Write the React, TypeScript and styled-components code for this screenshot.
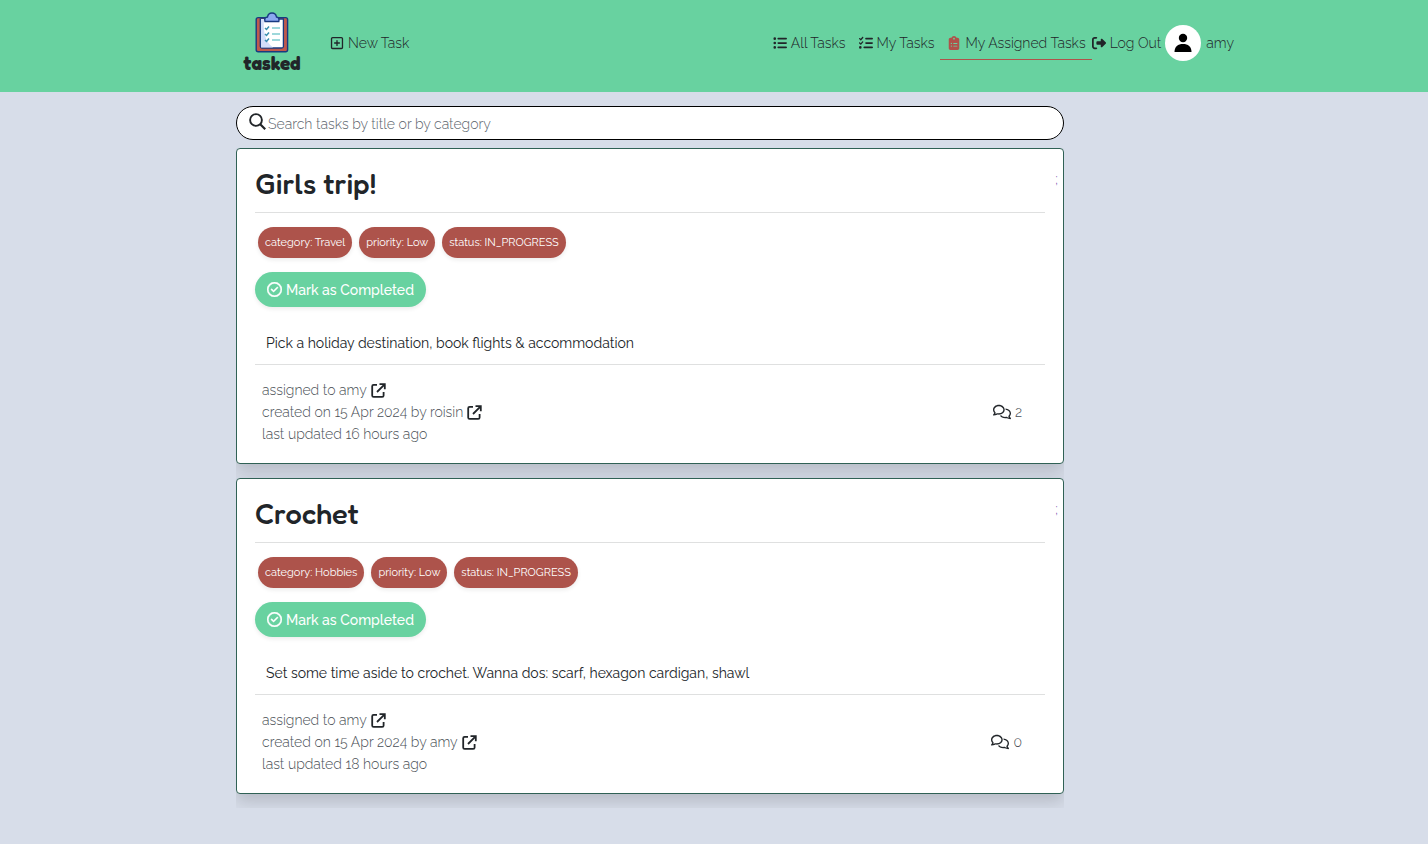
import React from "react";
import styled, { createGlobalStyle } from "styled-components";
import {
  FaRegSquarePlus,
  FaListUl,
  FaListCheck,
  FaClipboardList,
  FaRightFromBracket,
  FaRegCircleCheck,
  FaRegComments,
} from "react-icons/fa6";

const GlobalStyle = createGlobalStyle`
  *, *::before, *::after { box-sizing: border-box; }
  body {
    margin: 0;
    min-height: 100vh;
    background: #d7dde9;
    color: #212529;
    font-family: Raleway, Lato, sans-serif;
    font-size: 14px;
    font-weight: 300;
    line-height: 22px;
  }
`;

const Header = styled.header`
  background: #68d2a0;
  padding: 11px max(16px, calc(50% - 520px)) 11px max(16px, calc(50% - 478px));
  display: flex;
  align-items: center;
  height: 92px;
`;

const Brand = styled.a`
  display: block;
  margin: 0 0 8px 7px;
  svg { display: block; }
`;

const Nav = styled.nav`
  display: flex;
  flex: 1;
  align-items: center;
  margin: 0 0 6px 22px;
  white-space: nowrap;
`;

const NavLink = styled.a<{ $active?: boolean }>`
  display: flex;
  align-items: center;
  gap: 4px;
  height: 34px;
  padding: 1px 6px 0 7px;
  color: #212529;
  text-decoration: none;
  border-bottom: 1px solid ${(p) => (p.$active ? "#b0524a" : "transparent")};
  svg { font-size: 14px; flex: none; color: ${(p) => (p.$active ? "#b0524a" : "#212529")}; }
`;

const NavEnd = styled.div`
  display: flex;
  align-items: center;
  margin-left: auto;
`;

const LogOut = styled(NavLink)`
  padding: 1px 4px 0 0;
`;

const Profile = styled.a`
  display: flex;
  align-items: center;
  gap: 5px;
  color: #212529;
  text-decoration: none;
`;

const Avatar = styled.span`
  display: block;
  width: 36px;
  height: 36px;
  border-radius: 50%;
  background: #fff;
  svg { display: block; }
`;

const Main = styled.main`
  max-width: 956px;
  margin: 0 auto;
  padding-top: 14px;
`;

const Column = styled.div`
  width: 828px;
  max-width: 100%;
`;

const SearchForm = styled.form`
  display: flex;
  align-items: center;
  height: 34px;
  padding: 0 12px;
  border: 1px solid #000;
  border-radius: 17px;
  background: #fff;
  svg { flex: none; margin-bottom: 3px; }
`;

const SearchInput = styled.input`
  flex: 1;
  min-width: 0;
  border: 0;
  outline: 0;
  padding: 2px 2px 0;
  background: transparent;
  font: inherit;
  color: #212529;
  &::placeholder { color: #5c656d; opacity: 1; }
`;

const TaskList = styled.section`
  display: flex;
  flex-direction: column;
  gap: 14px;
  margin-top: 8px;
  padding-bottom: 14px;
  overflow: hidden;
`;

const Card = styled.article`
  display: flex;
  flex-direction: column;
  position: relative;
  padding: 18px;
  border: 1px solid #306155;
  border-radius: 4px;
  background: #fff;
  box-shadow: 0 8px 16px rgba(0, 0, 0, 0.15);
`;

const Stray = styled.span`
  position: absolute;
  top: 19px;
  right: 5px;
  color: #6a3fa8;
`;

const Title = styled.h2`
  margin: 0;
  padding-bottom: 12px;
  border-bottom: 1px solid #dfe0e0;
  font-family: Fredoka, Lato, sans-serif;
  font-size: 29px;
  font-weight: 500;
  line-height: 33px;
`;

const Badges = styled.div`
  display: flex;
  gap: 7px;
  margin: 14px 3px;
`;

const Badge = styled.span`
  padding: 0 7px;
  border-radius: 16px;
  background: #ad534b;
  color: #fff;
  font-size: 11px;
  font-weight: 400;
  line-height: 31px;
  box-shadow: 0 2px 4px rgba(0, 0, 0, 0.08);
`;

const CompleteButton = styled.button`
  display: flex;
  align-items: center;
  align-self: flex-start;
  gap: 4px;
  height: 35px;
  padding: 0 12px;
  border: 0;
  border-radius: 18px;
  background: #68d2a0;
  color: #fff;
  font: inherit;
  font-weight: 500;
  box-shadow: 0 2px 4px rgba(0, 0, 0, 0.08);
  svg { font-size: 15px; stroke-width: 14px; }
`;

const Description = styled.p`
  margin: 25px 0 0;
  padding: 0 11px 10px;
  border-bottom: 1px solid #dfe0e0;
  font-weight: 400;
`;

const Footer = styled.footer`
  display: flex;
  align-items: center;
  justify-content: space-between;
  padding: 14px 23px 0 7px;
  color: #4a5056;
`;

const MetaLine = styled.div`
  display: flex;
  align-items: center;
  gap: 4px;
  a { display: block; color: #212529; }
  svg { display: block; }
`;

const Comments = styled.a`
  display: flex;
  align-items: center;
  gap: 4px;
  color: #4a5056;
  text-decoration: none;
  svg { font-size: 18px; color: #212529; }
`;

function Logo() {
  return (
    <svg width="58" height="62" viewBox="0 0 58 62" role="img" aria-label="tasked">
      <rect x="13.2" y="6.6" width="31.400" height="34.200" rx="2" fill="#c0594c" stroke="#183a80" strokeWidth="1.4" />
      <path d="M17.300 8V35.500Q17.300 37 19 37H38.700Q40.400 37 40.400 35.500V8Z" fill="#fff" stroke="#183a80" strokeWidth="1.300" />
      <path d="M18 8H21C20 20 22 31 30 36.400H18Z" fill="#d3defa" />
      <path d="M22 10.500H35.800C36.500 8 35.500 6 33.500 6C33 3 31.500 2 29 2C26.500 2 25 3 24.500 6C22 6 21.300 8 22 10.500Z" fill="#8ba8f0" stroke="#183a80" strokeWidth="1.400" />
      <path d="M22 17l1.500 1.500 2.500-3M22 23l1.500 1.500 2.500-3M22 29l1.500 1.500 2.500-3" fill="none" stroke="#3a8fb0" strokeWidth="1.500" />
      <path d="M29 17H37M29 23H37M29 29H37" stroke="#7fcbd0" strokeWidth="1.700" />
      <text x="29" y="59" textAnchor="middle" fontFamily="Fredoka, Lato, sans-serif" fontSize="19" fontWeight="700" fill="#212529">tasked</text>
    </svg>
  );
}

function SearchIcon() {
  return (
    <svg width="17" height="17" viewBox="0 0 17 17" fill="none" stroke="currentColor" aria-hidden="true">
      <circle cx="7" cy="7" r="5.900" strokeWidth="1.900" />
      <path d="M11.200 11.200L16.200 16.200" strokeWidth="2.200" />
    </svg>
  );
}

function OpenIcon() {
  return (
    <svg width="15" height="15" viewBox="0 0 15 15" fill="none" stroke="currentColor" strokeWidth="1.800" aria-hidden="true">
      <path d="M6 1.900H2.600Q1.200 1.900 1.200 3.300V12.400Q1.200 13.800 2.600 13.800H11.200Q12.600 13.800 12.600 12.400V9" />
      <path d="M8.500 1.200H13.800V6.200M13.600 1.400L6 9" />
    </svg>
  );
}

type Task = {
  id: number;
  title: string;
  category: string;
  description: string;
  creator: string;
  updated: string;
  comments: number;
};

const tasks: Task[] = [
  { id: 1, title: "Girls trip!", category: "Travel", description: "Pick a holiday destination, book flights & accommodation", creator: "roisin", updated: "16 hours ago", comments: 2 },
  { id: 2, title: "Crochet", category: "Hobbies", description: "Set some time aside to crochet. Wanna dos: scarf, hexagon cardigan, shawl", creator: "amy", updated: "18 hours ago", comments: 0 },
];

function TaskCard({ task }: { task: Task }) {
  return (
    <Card>
      <Stray>;</Stray>
      <Title>{task.title}</Title>
      <Badges>
        <Badge>category: {task.category}</Badge>
        <Badge>priority: Low</Badge>
        <Badge>status: IN_PROGRESS</Badge>
      </Badges>
      <CompleteButton type="button"><FaRegCircleCheck />Mark as Completed</CompleteButton>
      <Description>{task.description}</Description>
      <Footer>
        <div>
          <MetaLine>assigned to amy <a href="#amy" aria-label="Open amy"><OpenIcon /></a></MetaLine>
          <MetaLine>created on 15 Apr 2024 by {task.creator} <a href="#creator" aria-label={`Open ${task.creator}`}><OpenIcon /></a></MetaLine>
          <MetaLine>last updated {task.updated}</MetaLine>
        </div>
        <Comments href="#comments"><FaRegComments />{task.comments}</Comments>
      </Footer>
    </Card>
  );
}

export default function App() {
  return (
    <>
      <GlobalStyle />
      <Header>
        <Brand href="#home"><Logo /></Brand>
        <Nav>
          <NavLink href="#new"><FaRegSquarePlus />New Task</NavLink>
          <NavEnd>
            <NavLink href="#all"><FaListUl />All Tasks</NavLink>
            <NavLink href="#mine"><FaListCheck />My Tasks</NavLink>
            <NavLink href="#assigned" $active><FaClipboardList />My Assigned Tasks</NavLink>
            <LogOut href="#logout"><FaRightFromBracket />Log Out</LogOut>
            <Profile href="#profile">
              <Avatar>
                <svg width="36" height="36" viewBox="0 0 36 36" aria-hidden="true">
                  <circle cx="18" cy="13" r="4.200" />
                  <path d="M9.500 27C9.500 21.500 13 19 18 19S26.500 21.500 26.500 27Z" />
                </svg>
              </Avatar>
              amy
            </Profile>
          </NavEnd>
        </Nav>
      </Header>
      <Main>
        <Column>
          <SearchForm>
            <SearchIcon />
            <SearchInput type="text" aria-label="Search tasks" placeholder="Search tasks by title or by category" />
          </SearchForm>
          <TaskList>
            {tasks.map((task) => <TaskCard key={task.id} task={task} />)}
          </TaskList>
        </Column>
      </Main>
    </>
  );
}
